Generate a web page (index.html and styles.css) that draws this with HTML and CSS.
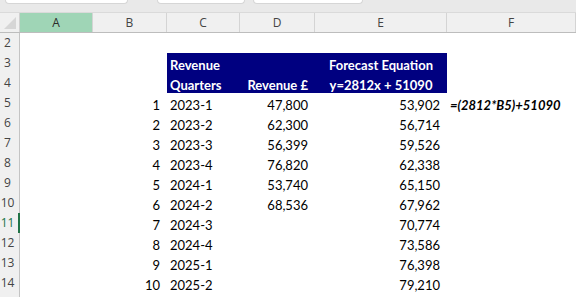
FILE: index.html
```html
<!DOCTYPE html>
<html>
<head>
<meta charset="utf-8">
<link rel="stylesheet" href="styles.css">
</head>
<body>
<div class="topbar"><div class="pill p1"></div><div class="pill p2"></div><div class="pill p3"></div></div>
<div class="sheet">
  <div class="row hdr">
    <div class="corner"><span class="tri"></span></div>
    <div class="ch sel">A</div><div class="ch">B</div><div class="ch">C</div><div class="ch">D</div><div class="ch">E</div><div class="ch">F</div>
  </div>
  <div class="row"><div class="rh"><span>2</span></div><div class="c"></div><div class="c"></div><div class="c"></div><div class="c"></div><div class="c"></div><div class="c"></div></div>
  <div class="row"><div class="rh"><span>3</span></div><div class="c"></div><div class="c"></div><div class="c blue">Revenue</div><div class="c blue"></div><div class="c blue ctr">Forecast Equation</div><div class="c"></div></div>
  <div class="row"><div class="rh"><span>4</span></div><div class="c"></div><div class="c"></div><div class="c blue">Quarters</div><div class="c blue r">Revenue £</div><div class="c blue ctr">y=2812x + 51090</div><div class="c"></div></div>
  <div class="row"><div class="rh"><span>5</span></div><div class="c"></div><div class="c r">1</div><div class="c">2023-1</div><div class="c r">47,800</div><div class="c r">53,902</div><div class="c formula">=(2812*B5)+51090</div></div>
  <div class="row"><div class="rh"><span>6</span></div><div class="c"></div><div class="c r">2</div><div class="c">2023-2</div><div class="c r">62,300</div><div class="c r">56,714</div><div class="c"></div></div>
  <div class="row"><div class="rh"><span>7</span></div><div class="c"></div><div class="c r">3</div><div class="c">2023-3</div><div class="c r">56,399</div><div class="c r">59,526</div><div class="c"></div></div>
  <div class="row"><div class="rh"><span>8</span></div><div class="c"></div><div class="c r">4</div><div class="c">2023-4</div><div class="c r">76,820</div><div class="c r">62,338</div><div class="c"></div></div>
  <div class="row"><div class="rh"><span>9</span></div><div class="c"></div><div class="c r">5</div><div class="c">2024-1</div><div class="c r">53,740</div><div class="c r">65,150</div><div class="c"></div></div>
  <div class="row"><div class="rh"><span>10</span></div><div class="c"></div><div class="c r">6</div><div class="c">2024-2</div><div class="c r">68,536</div><div class="c r">67,962</div><div class="c"></div></div>
  <div class="row"><div class="rh active"><span>11</span></div><div class="c"></div><div class="c r">7</div><div class="c">2024-3</div><div class="c"></div><div class="c r">70,774</div><div class="c"></div></div>
  <div class="row"><div class="rh"><span>12</span></div><div class="c"></div><div class="c r">8</div><div class="c">2024-4</div><div class="c"></div><div class="c r">73,586</div><div class="c"></div></div>
  <div class="row"><div class="rh"><span>13</span></div><div class="c"></div><div class="c r">9</div><div class="c">2025-1</div><div class="c"></div><div class="c r">76,398</div><div class="c"></div></div>
  <div class="row"><div class="rh"><span>14</span></div><div class="c"></div><div class="c r">10</div><div class="c">2025-2</div><div class="c"></div><div class="c r">79,210</div><div class="c"></div></div>
  <div class="row tail"><div class="rh"></div><div></div><div></div><div></div><div></div><div></div><div></div></div>
</div>
</body>
</html>
```
FILE: styles.css
```css
* { box-sizing: border-box; }
html, body { margin: 0; padding: 0; background: #ffffff; overflow: hidden; }
body { width: 576px; height: 297px; font-family: Lato, "Liberation Sans", sans-serif; }

.topbar { height: 13px; background: #e9e9e9; display: flex; align-items: flex-start; border-bottom: 1px solid #dadada; }
.pill { height: 4px; background: #ffffff; border: 1px solid #d6d6d6; border-top: none; border-radius: 0 0 5px 5px; }
.p1 { margin-left: 5px; width: 123px; }
.p2 { margin-left: 29px; width: 88px; }
.p3 { margin-left: 8px; width: 110px; }

.row { display: grid; grid-template-columns: 20px 73px 74px 73px 75px 132px 129px; height: 20px; }
.row.tail { height: 4px; }

.hdr { background: #f0f0f0; border-bottom: 1px solid #bdbdbd; }
.corner { position: relative; border-right: 1px solid #d0d0d0; }
.tri { position: absolute; right: 3px; bottom: 3px; width: 0; height: 0; border-left: 12px solid transparent; border-bottom: 12px solid #d6d6d6; }
.ch { font-family: "Open Sans", sans-serif; font-size: 12px; color: #444; text-align: center; line-height: 19px; border-right: 1px solid #d4d4d4; }
.ch.sel { background: #9fd5b6; color: #2b2b2b; }

.rh { background: #f0f0f0; border-right: 1px solid #c4c4c4; border-bottom: 1px solid #dadada; font-family: "Open Sans", sans-serif; font-size: 12px; color: #444; line-height: 20px; }
.tail .rh { border-bottom: none; }
.rh span { display: block; width: 15px; text-align: center; }
.rh.active { color: #217346; border-right: 2px solid #217346; }

.c { height: 20px; line-height: 24px; font-size: 13px; color: #000; padding: 0 7px 0 3px; white-space: nowrap; }
.r { text-align: right; }
.ctr { text-align: center; padding: 0; }
.blue { background: #000080; color: #ffffff; font-weight: 700; }
.formula { font-weight: 700; font-style: italic; overflow: visible; }
```
